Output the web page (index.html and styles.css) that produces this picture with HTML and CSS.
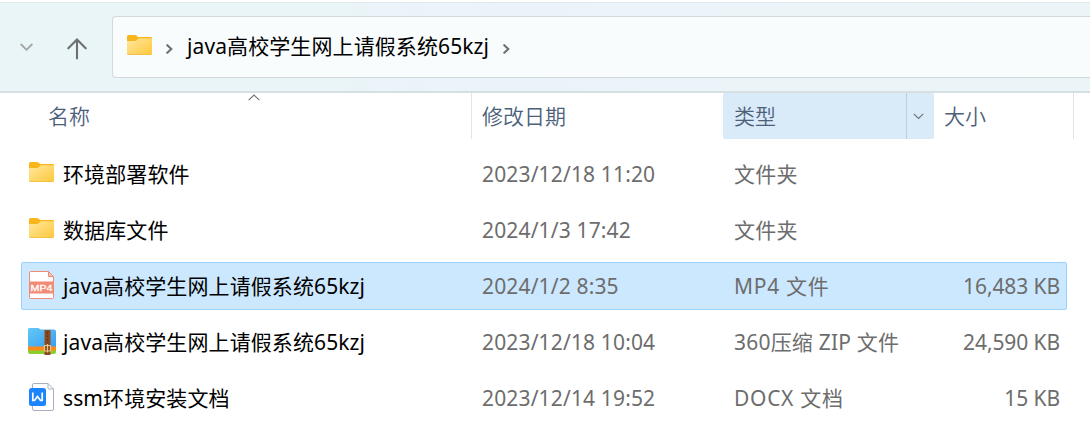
FILE: index.html
```html
<!DOCTYPE html>
<html lang="zh-CN">
<head>
    <meta charset="UTF-8">
    <meta name="viewport" content="width=device-width, initial-scale=1.0">
    <title>java高校学生网上请假系统65kzj</title>
    <link rel="stylesheet" href="styles.css">
</head>
<body>
    <!-- Shared folder icon -->
    <svg class="defs" width="0" height="0">
        <defs>
            <linearGradient id="folderFill" x1="0" y1="0" x2="1" y2="1">
                <stop offset="0" stop-color="#ffe8a0"/>
                <stop offset="1" stop-color="#ffc83a"/>
            </linearGradient>
            <symbol id="folder" viewBox="0 0 25 20">
                <path d="M0 1.500Q0 0 1.500 0H8Q9 0 9.700.7L11 2H24Q25 2 25 3V10H0Z" fill="#f9b51c"/>
                <path d="M0 6H8Q9 6 9.700 5.300L11 4Q11.500 3.300 12.500 3.300H25V18.500Q25 20 23.500 20H1.500Q0 20 0 18.500Z" fill="url(#folderFill)"/>
                <path d="M.5 19Q1 19.600 2 19.600H23Q24 19.600 24.500 19" fill="none" stroke="#f0b93c" stroke-width=".8"/>
            </symbol>
        </defs>
    </svg>

    <div class="toolbar">
        <svg class="nav-down" width="14" height="9" viewBox="0 0 14 9"><path d="M1.200 1.500L6.500 6.800L11.800 1.500"/></svg>
        <svg class="nav-up" width="20" height="22" viewBox="0 0 20 22"><path d="M10 20.500V1.800M1.300 10.300L10 1.600L18.700 10.300"/></svg>
        <div class="address">
            <svg class="folder" width="25" height="20"><use href="#folder"/></svg>
            <svg class="crumb" width="7" height="10" viewBox="0 0 7 10"><path d="M1.300 1.200L5.300 5L1.300 8.800"/></svg>
            <span class="path">java高校学生网上请假系统65kzj</span>
            <svg class="crumb" width="7" height="10" viewBox="0 0 7 10"><path d="M1.300 1.200L5.300 5L1.300 8.800"/></svg>
        </div>
    </div>

    <div class="columns">
        <div class="col col-name">名称
            <svg class="sort" width="12" height="7" viewBox="0 0 12 7"><path d="M.7 6.200L6 1L11.300 6.200"/></svg>
        </div>
        <div class="col">修改日期</div>
        <div class="col col-type">
            <span>类型</span>
            <span class="drop"><svg width="11" height="7" viewBox="0 0 11 7"><path d="M.8 .8L5.500 5.500L10.200 .8"/></svg></span>
        </div>
        <div class="col col-size">大小</div>
    </div>

    <div class="files">
        <div class="row">
            <div class="name">
                <svg class="folder" width="25" height="20"><use href="#folder"/></svg>
                <span>环境部署软件</span>
            </div>
            <div class="date">2023/12/18 11:20</div>
            <div class="type">文件夹</div>
            <div class="size"></div>
        </div>
        <div class="row">
            <div class="name">
                <svg class="folder" width="25" height="20"><use href="#folder"/></svg>
                <span>数据库文件</span>
            </div>
            <div class="date">2024/1/3 17:42</div>
            <div class="type">文件夹</div>
            <div class="size"></div>
        </div>
        <div class="row selected">
            <div class="name">
                <svg class="raised" width="28" height="28" viewBox="0 0 28 28">
                    <path d="M1.500 1.500Q1.500 .5 2.500 .5H20.500L25.500 5.500V26.500Q25.500 27.500 24.500 27.500H2.500Q1.500 27.500 1.500 26.500Z" fill="#fff" stroke="#f28b75"/>
                    <path d="M20.500 .5V5.500H25.500Z" fill="#f9c4b8" stroke="#f28b75"/>
                    <path d="M1 10.500H26V22.500H1Z" fill="#f28b75"/>
                    <text class="mp4" x="2.500" y="20.200" textLength="22" lengthAdjust="spacingAndGlyphs">MP4</text>
                </svg>
                <span>java高校学生网上请假系统65kzj</span>
            </div>
            <div class="date">2024/1/2 8:35</div>
            <div class="type type-wide">MP4 文件</div>
            <div class="size">16,483 KB</div>
        </div>
        <div class="row">
            <div class="name">
                <svg class="raised" width="28" height="28" viewBox="0 0 28 28">
                    <defs>
                        <linearGradient id="zipFill" x1="0" y1="0" x2="1" y2="1">
                            <stop offset="0" stop-color="#62c9f8"/>
                            <stop offset="1" stop-color="#3b9df0"/>
                        </linearGradient>
                    </defs>
                    <path d="M0 20H28V25Q28 27 26 27H2Q0 27 0 25Z" fill="#8bcf2e"/>
                    <path d="M0 18H28V23.500H2Q0 23.500 0 22Z" fill="#ff8a1c"/>
                    <path d="M0 2.500Q0 1 1.500 1H10.500L12.500 2.500H26Q28 2.500 28 4.500V19.500H2Q0 19.500 0 18Z" fill="url(#zipFill)"/>
                    <path d="M16.500 3H22.500V28H16.500Z" fill="#8b4a1d"/>
                    <path d="M19.500 5V16" stroke="#5e2f10" stroke-width="1.200" stroke-dasharray="1.500 2"/>
                    <path d="M16.500 18.500H22.500V24H16.500ZM19.500 17V25.500" fill="none" stroke="#ecc586" stroke-width="1.200"/>
                </svg>
                <span>java高校学生网上请假系统65kzj</span>
            </div>
            <div class="date">2023/12/18 10:04</div>
            <div class="type">360压缩 ZIP 文件</div>
            <div class="size">24,590 KB</div>
        </div>
        <div class="row">
            <div class="name">
                <svg class="raised" width="28" height="28" viewBox="0 0 28 28">
                    <path d="M4.500 2Q4.500.5 6 .5H20L25.500 6V26Q25.500 27.500 24 27.500H6Q4.500 27.500 4.500 26Z" fill="#fff" stroke="#a9afc0"/>
                    <path d="M20 .5V4.500Q20 6 21.500 6H25.500" fill="none" stroke="#a9afc0"/>
                    <rect x="1" y="5" width="17" height="18" rx="2.500" fill="#1c84ff"/>
                    <path d="M4.800 9.500V17.500H6.500L9.500 13.500L12.500 17.500H14.200V9.500" fill="none" stroke="#fff" stroke-width="1.700"/>
                </svg>
                <span>ssm环境安装文档</span>
            </div>
            <div class="date">2023/12/14 19:52</div>
            <div class="type type-wide">DOCX 文档</div>
            <div class="size">15 KB</div>
        </div>
    </div>
</body>
</html>
```
FILE: styles.css
```css
* {
    box-sizing: border-box;
}

body {
    margin: 0;
    padding-top: 2px;
    background-color: #fff;
    font-family: "Noto Sans", "Noto Sans CJK SC", sans-serif;
    font-size: 21px;
    line-height: 30px;
    color: #000;
    overflow: hidden;
    white-space: nowrap;
}

svg {
    display: block;
    flex: none;
}

.defs {
    height: 0;
}

/* Toolbar */
.toolbar {
    display: flex;
    height: 91px;
    padding-left: 20px;
    border-top: 1px solid #dfe9ec;
    border-bottom: 2px solid #d6e0e3;
    background: linear-gradient(90deg, #eaf5f7 0%, #eaf5f7 30%, #ebf3fb 40%, #ebf4f8 65%, #ebf4f7 100%);
}

.toolbar path {
    fill: none;
    stroke: #6d6f71;
    stroke-width: 2.1;
    stroke-linecap: round;
}

.nav-down {
    margin-top: 40px;
}

.toolbar .nav-down path {
    stroke: #a2a5a6;
    stroke-width: 1.8;
}

.nav-up {
    margin: 35px 25px 0 33px;
}

.address {
    flex: 1;
    display: flex;
    align-items: center;
    height: 62px;
    margin-top: 13px;
    padding: 0 0 2px 14px;
    border: 1px solid #d3d8da;
    border-right: none;
    border-radius: 4px 0 0 4px;
    background-color: #f9fcfd;
}

.address .folder {
    margin-bottom: 2px;
}

.path {
    letter-spacing: 0.1px;
}

.crumb {
    margin: 5px 14px 0 14px;
}

/* Column headers */
.columns,
.row {
    display: grid;
}

.columns {
    grid-template-columns: 472px 251px 211px 140px;
    height: 46px;
    line-height: 46px;
    font-weight: 350;
    color: #4c607a;
}

.columns path {
    fill: none;
    stroke: #6b7177;
    stroke-width: 1.1;
}

.col {
    padding-left: 10px;
}

.col-name {
    position: relative;
    padding-left: 48px;
    border-right: 1px solid #e1e3e5;
}

.sort {
    position: absolute;
    left: 248px;
    top: 1px;
}

.col-type {
    display: flex;
    justify-content: space-between;
    padding-left: 11px;
    background-color: #d9eaf9;
    border-radius: 2px;
}

.drop {
    display: flex;
    align-items: center;
    width: 28px;
    padding-left: 6px;
    border-left: 1px solid #bacfdf;
}

.col-size {
    border-right: 1px solid #e1e3e5;
}

/* File list */
.files {
    display: grid;
    gap: 8px;
    padding: 11px 0 0 21px;
}

.row {
    grid-template-columns: 460px 252px 1fr 130px;
    align-items: center;
    width: 1046px;
    height: 48px;
    padding-right: 6px;
    border: 1px solid transparent;
    border-radius: 2px;
    color: #6d6d6d;
}

.row.selected {
    background-color: #cce8ff;
    border-color: #99d1ff;
}

.name {
    display: flex;
    align-items: center;
    gap: 7px;
    padding-left: 6px;
    color: #000;
    letter-spacing: 0.1px;
}

.name .folder {
    margin: 0 2px 4px 1px;
}

.raised {
    margin-bottom: 2px;
}

.date {
    letter-spacing: 0.15px;
}

.type {
    letter-spacing: 0.2px;
}

.type-wide {
    letter-spacing: 0.7px;
}

.size {
    text-align: right;
    letter-spacing: -0.1px;
}

.mp4 {
    font: 9.5px "Liberation Sans", sans-serif;
    fill: #fff;
    stroke: #fff;
    stroke-width: 0.3;
    letter-spacing: 0;
}
```
